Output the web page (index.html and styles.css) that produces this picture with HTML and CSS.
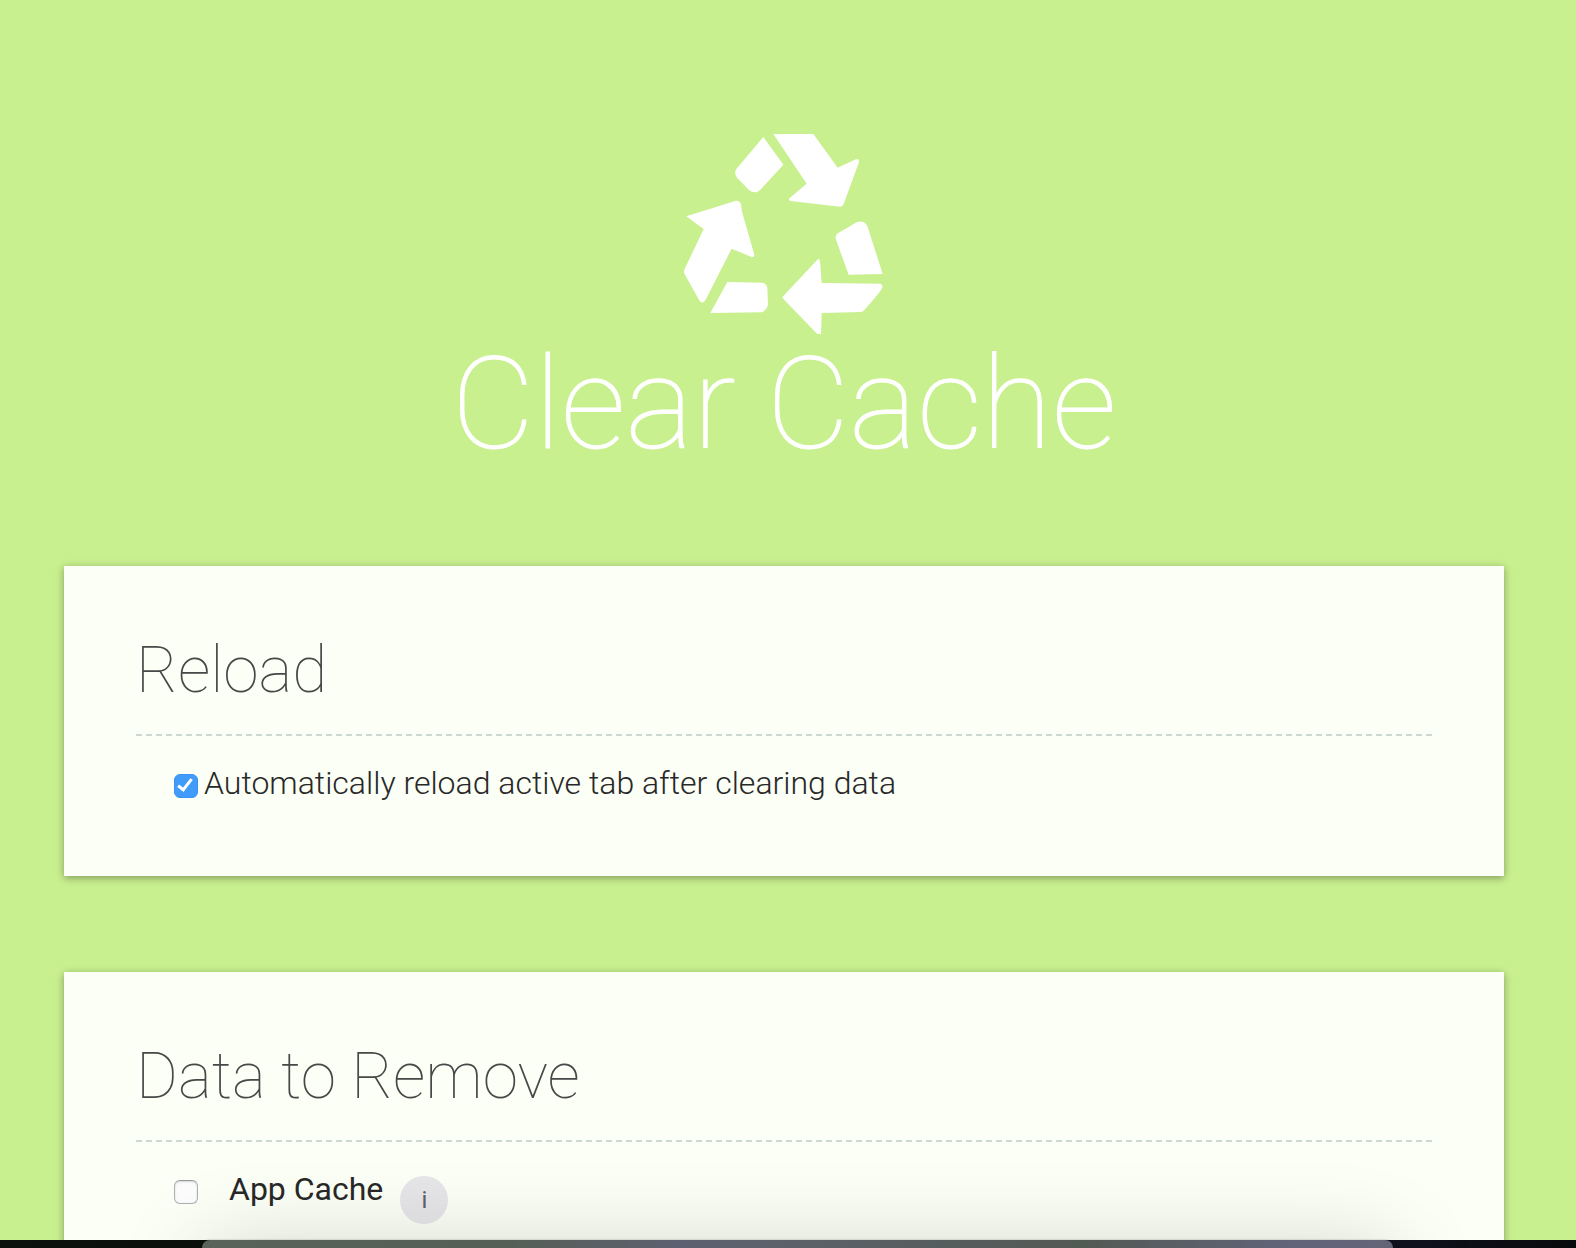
FILE: index.html
```html
<!DOCTYPE html>
<html lang="en">
<head>
    <meta charset="utf-8">
    <title>Clear Cache</title>
    <link rel="stylesheet" href="styles.css">
</head>
<body>
    <div class="page">
        <header class="header">
            <svg class="logo" viewBox="72 42 600 600" aria-hidden="true">
                <path d="M310 51 L370 134 L304 206 Q287 226 266 209 L231 173 Q221 160 229 147 Z"/>
                <path d="M340 42 H460 L533 143 L589 117 Q598 116 597 126 L551 252 Q548 260 541 260 L392 243 Q384 240 389 234 L440 191 Z"/>
                <path d="M79 289 L228 242 Q239 241 243 253 L246 275 L283 404 Q284 413 275 411 L215 386 L137 539 Q128 553 119 543 L75 464 Q69 456 75 445 L131 327 Z"/>
                <path d="M202 486 L303 488 Q320 489 322 505 L324 553 Q320 573 304 577 L151 579 Z"/>
                <path d="M531 341 L590 307 Q611 298 622 318 L668 462 L566 464 L527 356 Q526 347 531 341 Z"/>
                <path d="M368 530 L472 419 Q479 413 480 423 L485 489 L661 491 Q669 494 667 503 Q664 512 613 570 Q609 576 602 576 L485 579 L483 642 H472 L371 538 Q367 534 368 530 Z"/>
            </svg>
            <h1>Clear Cache</h1>
        </header>

        <section class="card">
            <h2>Reload</h2>
            <div class="option">
                <input type="checkbox" id="autoreload" checked>
                <label for="autoreload">Automatically reload active tab after clearing data</label>
            </div>
        </section>

        <section class="card">
            <h2>Data to Remove</h2>
            <div class="option data">
                <input type="checkbox" id="appcache">
                <label for="appcache">App Cache</label>
                <button type="button" class="info">i</button>
            </div>
        </section>
    </div>

    <div class="desktop">
        <div class="dock"></div>
    </div>
</body>
</html>
```

FILE: styles.css
```css
body {
    margin: 0;
    height: 100vh;
    overflow: hidden;
    position: relative;
    background-color: #c9f08f;
    font-family: Roboto, sans-serif;
    font-size: 32px;
    font-weight: 300;
    line-height: 38px;
    color: #282828;
}
.page {
    padding: 134px 72px 0 64px;
}
.header {
    display: flex;
    flex-direction: column;
    align-items: center;
    gap: 6px;
    margin-bottom: 98px;
}
.logo {
    width: 200px;
    height: 200px;
    fill: #fff;
}
h1 {
    margin: 0;
    font-size: 128px;
    font-weight: 100;
    line-height: 128px;
    color: #fff;
    -webkit-text-stroke: 1px #fff;
}
.card {
    margin-bottom: 96px;
    padding: 72px;
    background-color: #fbfff5;
    box-shadow: 0 2px 8px rgba(0, 0, 0, 0.36);
}
h2 {
    margin: 0 0 28px;
    padding-bottom: 30px;
    border-bottom: 2px dashed #ced8d2;
    font-size: 64px;
    font-weight: 100;
    line-height: 66px;
    color: #484848;
}
.option {
    display: flex;
    align-items: flex-start;
    padding: 0 38px 2px;
}
.option input {
    appearance: none;
    box-sizing: border-box;
    flex: none;
    width: 24px;
    height: 24px;
    margin: 10px 6px 0 0;
    border: 1px solid #b0b0b0;
    border-top-color: #999;
    border-radius: 6px;
    background-color: #fcfcfd;
    box-shadow: inset 0 1px 2px rgba(0, 0, 0, 0.15);
}
.option input:checked {
    border-color: #3b92f5;
    background-color: #419bf9;
    box-shadow: none;
}
.option input:checked::after {
    content: "";
    display: block;
    width: 5px;
    height: 12px;
    margin: 1px 0 0 6px;
    border: solid #fff;
    border-width: 0 3px 3px 0;
    transform: rotate(38deg);
}
.data input {
    margin-right: 31px;
}
.data label {
    font-weight: 400;
}
.info {
    width: 48px;
    height: 48px;
    margin: 6px 0 0 17px;
    padding: 0;
    border: none;
    border-radius: 50%;
    background-color: #e6e5e8;
    font-family: inherit;
    font-size: 24px;
    font-weight: 400;
    color: #606068;
}
/* strip of desktop under the browser window */
.desktop {
    position: absolute;
    left: 0;
    right: 0;
    bottom: 0;
    height: 8px;
    background: linear-gradient(to right, #0c120d, #060709 50%, #10121e 90%, #08090a);
}
.dock {
    height: 200px;
    margin: 0 183px 0 202px;
    border-radius: 8px 8px 0 0;
    background: linear-gradient(to right, #59635a, #555f55 25%, #5d6070 40%, #5b6168 50%, #525a54 74%, #62647a 92%, #656477);
    box-shadow: 0 0 2px rgba(0, 0, 0, 0.3), 0 10px 90px rgba(0, 0, 0, 0.18);
}
```
